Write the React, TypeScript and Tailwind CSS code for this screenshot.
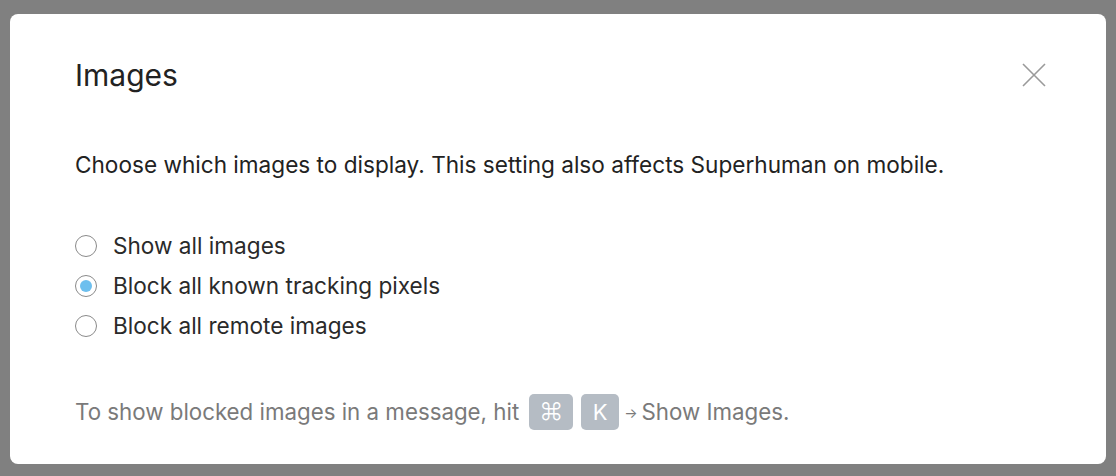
import React, { useState } from 'react';

const options = [
    'Show all images',
    'Block all known tracking pixels',
    'Block all remote images',
];

export default function App() {
    const [selected, setSelected] = useState(1);

    return (
        <div className="w-[1116px] h-[476px] bg-[#808080] pt-[14px] px-[10px]" style={{ fontFamily: 'Inter, sans-serif' }}>
            <div className="h-[450px] bg-white rounded-[8px] pt-[41px] pl-[65px] pr-[60px]">
                {/* Header */}
                <div className="flex items-center justify-between h-[40px]">
                    <h1 className="text-[30px] leading-[40px] text-[#222]">Images</h1>
                    <button className="w-[24px] h-[24px] shrink-0 text-[#9a9a9a]">
                        <svg viewBox="0 0 24 24" width="24" height="24" fill="none" stroke="currentColor" strokeWidth="1.6">
                            <path d="M1 1 L23 23 M23 1 L1 23" />
                        </svg>
                    </button>
                </div>

                <p className="mt-[55px] text-[22.6px] leading-[30px] text-[#222]">
                    Choose which images to display. This setting also affects Superhuman on mobile.
                </p>

                {/* Options */}
                <div className="mt-[46px] flex flex-col">
                    {options.map((label, idx) => (
                        <label key={idx} className="flex items-center h-[40px] cursor-pointer" onClick={() => setSelected(idx)}>
                            <span className="w-[22px] h-[22px] rounded-full border-[1.5px] border-[#8a8a8a] flex items-center justify-center">
                                {selected === idx && <span className="w-[12px] h-[12px] rounded-full bg-[#6dbfee]" />}
                            </span>
                            <span className="ml-[16px] text-[22.6px] text-[#2a2a2a]">{label}</span>
                        </label>
                    ))}
                </div>

                {/* Footer hint */}
                <div className="mt-[48px] flex items-center h-[36px] text-[22.3px] text-[#7a7a7a]">
                    <span>To show blocked images in a message, hit</span>
                    <span className="ml-[10px] w-[44px] h-[36px] rounded-[5px] bg-[#b5bcc4] text-white flex items-center justify-center text-[24px] font-light">⌘</span>
                    <span className="ml-[8px] w-[38px] h-[36px] rounded-[5px] bg-[#b5bcc4] text-white flex items-center justify-center text-[22px]">K</span>
                    <span className="ml-[5px] text-[14px]">→</span>
                    <span className="ml-[4px]">Show Images.</span>
                </div>
            </div>
        </div>
    );
}
